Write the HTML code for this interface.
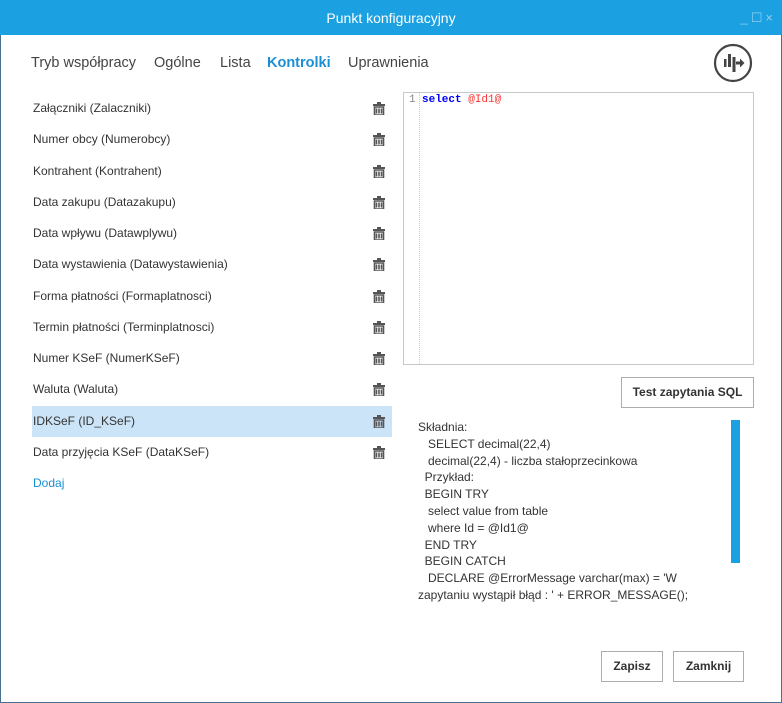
<!DOCTYPE html>
<html><head><meta charset="utf-8"><style>
*{margin:0;padding:0;box-sizing:border-box}
body{width:782px;height:703px;overflow:hidden;background:#fff;font-family:"Liberation Sans","DejaVu Sans",sans-serif;color:#333;position:relative}
.win{position:absolute;left:0;top:0;width:782px;height:703px;border:1px solid #4a6f8f;border-top:none}
.title{position:absolute;left:0;top:0;width:782px;height:35px;background:#1ba1e2;color:#fff;font-size:14px;text-align:center;line-height:36px}
.ctl{position:absolute;top:0;right:6px;line-height:36px;color:#d6ecf8;font-size:13px;letter-spacing:3px;opacity:.6}
.tabs{position:absolute;top:55px;left:31px;font-size:14.5px;color:#444;white-space:nowrap}
.tabs span{position:absolute}
.it{position:absolute;left:32px;width:360px;height:31px;font-size:12px;line-height:31px;color:#333;padding-left:1px}
.it.sel{background:#cce4f7}
.tr{position:absolute;left:373px;width:12px;height:13px}
.ed{position:absolute;left:403px;top:92px;width:351px;height:273px;border:1px solid #c8c8c8}
.gut{position:absolute;left:15px;top:0;width:1px;height:271px;border-left:1px dotted #ccc}
.btn{position:absolute;border:1px solid #adadad;background:#fff;font-size:12px;font-weight:bold;color:#333;text-align:center}
.help{position:absolute;left:418px;top:419px;font-size:12px;line-height:16.8px;color:#333;white-space:pre}
</style></head><body>
<div class="win"></div>
<div class="title">Punkt konfiguracyjny<span class="ctl">_☐×</span></div>
<div class="tabs">
<span style="left:0">Tryb współpracy</span>
<span style="left:123px">Ogólne</span>
<span style="left:189px">Lista</span>
<span style="left:236px;color:#1a8fd6;font-weight:bold">Kontrolki</span>
<span style="left:317px">Uprawnienia</span>
</div>
<svg style="position:absolute;left:713px;top:43px" width="40" height="40" viewBox="0 0 40 40">
<circle cx="20" cy="20" r="18" fill="none" stroke="#444" stroke-width="2.2"/>
<rect x="11" y="16" width="2.5" height="8" fill="#444"/>
<rect x="15" y="11" width="3" height="13" fill="#444"/>
<rect x="19.5" y="14" width="3" height="15" fill="#444"/>
<path d="M23 18.5h4v-3l4.5 4.5-4.5 4.5v-3h-4z" fill="#444"/>
</svg>
<div class="it" style="top:93px">Załączniki (Zalaczniki)</div>
<div class="it" style="top:124px">Numer obcy (Numerobcy)</div>
<div class="it" style="top:156px">Kontrahent (Kontrahent)</div>
<div class="it" style="top:187px">Data zakupu (Datazakupu)</div>
<div class="it" style="top:218px">Data wpływu (Datawplywu)</div>
<div class="it" style="top:249px">Data wystawienia (Datawystawienia)</div>
<div class="it" style="top:281px">Forma płatności (Formaplatnosci)</div>
<div class="it" style="top:312px">Termin płatności (Terminplatnosci)</div>
<div class="it" style="top:343px">Numer KSeF (NumerKSeF)</div>
<div class="it" style="top:374px">Waluta (Waluta)</div>
<div class="it sel" style="top:406px">IDKSeF (ID_KSeF)</div>
<div class="it" style="top:437px">Data przyjęcia KSeF (DataKSeF)</div>
<div class="it" style="top:468px;color:#1a8fd6">Dodaj</div>
<svg width="0" height="0" style="position:absolute"><defs><g id="t"><rect x="4" y="0" width="4" height="2" fill="#555"/><rect x="0" y="2" width="12" height="2" fill="#555"/><path d="M1.5 5h9v8h-9z M3.5 6.5v5 M6 6.5v5 M8.5 6.5v5" fill="none" stroke="#555" stroke-width="1.6"/></g></defs></svg>
<svg class="tr" style="top:102px"><use href="#t"/></svg>
<svg class="tr" style="top:133px"><use href="#t"/></svg>
<svg class="tr" style="top:165px"><use href="#t"/></svg>
<svg class="tr" style="top:196px"><use href="#t"/></svg>
<svg class="tr" style="top:227px"><use href="#t"/></svg>
<svg class="tr" style="top:258px"><use href="#t"/></svg>
<svg class="tr" style="top:290px"><use href="#t"/></svg>
<svg class="tr" style="top:321px"><use href="#t"/></svg>
<svg class="tr" style="top:352px"><use href="#t"/></svg>
<svg class="tr" style="top:383px"><use href="#t"/></svg>
<svg class="tr" style="top:415px"><use href="#t"/></svg>
<svg class="tr" style="top:446px"><use href="#t"/></svg>
<div class="ed"><div class="gut"></div>
<div style="position:absolute;left:5px;top:1px;font-family:'Liberation Mono',monospace;font-size:11px;color:#888">1</div>
<div style="position:absolute;left:18px;top:1px;font-family:'Liberation Mono',monospace;font-size:11px;white-space:pre"><b style="color:#00f">select</b> <span style="color:#f33">@Id1@</span></div>
</div>
<div class="btn" style="left:621px;top:377px;width:133px;height:31px;line-height:29px">Test zapytania SQL</div>
<div class="help">Składnia:
   SELECT decimal(22,4)
   decimal(22,4) - liczba stałoprzecinkowa
  Przykład:
  BEGIN TRY
   select value from table
   where Id = @Id1@
  END TRY
  BEGIN CATCH
   DECLARE @ErrorMessage varchar(max) = 'W
zapytaniu wystąpił błąd : ' + ERROR_MESSAGE();</div>
<div style="position:absolute;left:731px;top:420px;width:9px;height:143px;background:#1ba1e2"></div>
<div class="btn" style="left:601px;top:651px;width:62px;height:31px;line-height:29px">Zapisz</div>
<div class="btn" style="left:673px;top:651px;width:71px;height:31px;line-height:29px">Zamknij</div>
</body></html>
